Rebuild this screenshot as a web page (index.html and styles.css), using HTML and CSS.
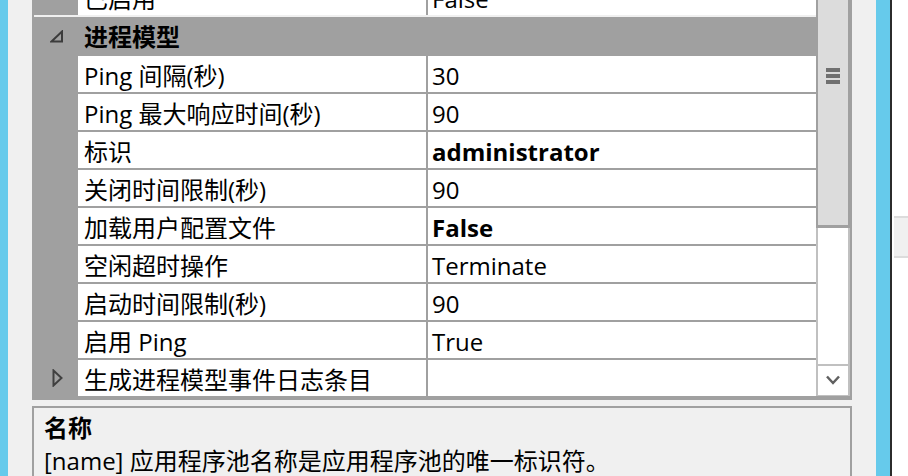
FILE: index.html
```html
<!DOCTYPE html>
<html lang="zh-CN">
<head>
<meta charset="utf-8">
<title>属性</title>
<link rel="stylesheet" href="styles.css">
</head>
<body>
<div class="page">
  <div class="edge-blue-left"></div>
  <main class="main">
    <section class="grid">
      <div class="list">
        <div class="row first">
          <div class="margin"></div>
          <div class="cell name">已启用</div>
          <div class="cell value">False</div>
        </div>
        <div class="sep"></div>
        <div class="cat">
          <div class="margin">
            <svg class="tri-open" width="14" height="13" viewBox="0 0 14 13"><polygon points="1.5,11.5 12,1.5 12,11.5" fill="none" stroke="#3c3c3c" stroke-width="2" stroke-linejoin="miter"/></svg>
          </div>
          <div class="cat-name">进程模型</div>
        </div>
        <div class="row"><div class="margin"></div><div class="cell name">Ping 间隔(秒)</div><div class="cell value">30</div></div>
        <div class="row"><div class="margin"></div><div class="cell name">Ping 最大响应时间(秒)</div><div class="cell value">90</div></div>
        <div class="row"><div class="margin"></div><div class="cell name">标识</div><div class="cell value bold">administrator</div></div>
        <div class="row"><div class="margin"></div><div class="cell name">关闭时间限制(秒)</div><div class="cell value">90</div></div>
        <div class="row"><div class="margin"></div><div class="cell name">加载用户配置文件</div><div class="cell value bold">False</div></div>
        <div class="row"><div class="margin"></div><div class="cell name">空闲超时操作</div><div class="cell value">Terminate</div></div>
        <div class="row"><div class="margin"></div><div class="cell name">启动时间限制(秒)</div><div class="cell value">90</div></div>
        <div class="row"><div class="margin"></div><div class="cell name">启用 Ping</div><div class="cell value">True</div></div>
        <div class="row">
          <div class="margin">
            <svg class="tri-closed" width="11" height="18" viewBox="0 0 11 18"><polygon points="1.5,1.5 9.5,9 1.5,16.5" fill="none" stroke="#404040" stroke-width="2"/></svg>
          </div>
          <div class="cell name">生成进程模型事件日志条目</div>
          <div class="cell value"></div>
        </div>
      </div>
      <div class="scrollbar">
        <div class="thumb">
          <svg class="grip" width="14" height="16" viewBox="0 0 14 16"><rect x="0" y="0" width="14" height="4" fill="#707070"/><rect x="0" y="6" width="14" height="4" fill="#707070"/><rect x="0" y="12" width="14" height="4" fill="#707070"/></svg>
        </div>
        <div class="track"></div>
        <div class="down">
          <svg width="14" height="11" viewBox="0 0 14 11"><polyline points="1,1.5 7,8 13,1.5" fill="none" stroke="#606060" stroke-width="2.5"/></svg>
        </div>
      </div>
    </section>
    <section class="desc">
      <div class="desc-title">名称</div>
      <div class="desc-text">[name] 应用程序池名称是应用程序池的唯一标识符。</div>
    </section>
  </main>
  <div class="edge-blue"></div>
  <div class="edge-dark"></div>
  <div class="edge-right"><div class="side-panel"></div></div>
</div>
</body>
</html>
```

FILE: styles.css
```css
* {
  box-sizing: border-box;
  margin: 0;
  padding: 0;
}

html, body {
  width: 908px;
  height: 476px;
  overflow: hidden;
}

body {
  background: #f0f0f0;
  font-family: "Open Sans", "Noto Sans CJK SC", sans-serif;
  font-size: 24px;
  color: #000;
}

.page {
  display: flex;
  height: 476px;
}

.edge-blue-left {
  width: 8px;
  flex: none;
  background: #66caeb;
}

.main {
  width: 868px;
  flex: none;
  padding: 0 24px;
  display: flex;
  flex-direction: column;
  gap: 6px;
  overflow: hidden;
}

.grid {
  height: 400px;
  flex: none;
  background: #a0a0a0;
  display: flex;
  overflow: hidden;
}

.list {
  width: 784px;
  flex: none;
  margin-top: -21px;
  display: flex;
  flex-direction: column;
}

.row {
  display: grid;
  grid-template-columns: 44px 348px 390px;
  column-gap: 2px;
  height: 36px;
  margin-bottom: 2px;
  flex: none;
}

.row.first {
  margin-bottom: 0;
}

.sep {
  height: 2px;
  margin-left: 2px;
  background: #f0f0f0;
  flex: none;
}

.cat {
  height: 39px;
  display: flex;
  align-items: center;
  flex: none;
}

.margin {
  width: 44px;
  flex: none;
  display: flex;
  align-items: center;
  padding-left: 18px;
}

.row .margin {
  padding-left: 20px;
}

.cell {
  background: #fff;
  height: 36px;
  line-height: 40px;
  overflow: hidden;
  white-space: nowrap;
}

.name {
  padding-left: 6px;
}

.value {
  padding-left: 4px;
}

.bold {
  font-weight: 700;
}

.cat-name {
  font-weight: 700;
  padding-left: 8px;
  line-height: 39px;
  white-space: nowrap;
}

.scrollbar {
  width: 36px;
  flex: none;
  display: flex;
  flex-direction: column;
  padding: 0 2px 4px 0;
}

.thumb {
  height: 228px;
  flex: none;
  background: #dcdcdc;
  border-left: 2px solid #a0a0a0;
  border-right: 2px solid #a0a0a0;
  border-bottom: 3px solid #a0a0a0;
  display: flex;
  justify-content: center;
  padding-top: 68px;
}

.track {
  flex: 1;
  background: #fff;
  border-left: 2px solid #c0c0c0;
  border-right: 2px solid #c0c0c0;
}

.down {
  height: 32px;
  flex: none;
  background: #fff;
  border: 2px solid #c0c0c0;
  border-bottom-width: 1px;
  display: flex;
  align-items: center;
  justify-content: center;
}

.desc {
  flex: 1;
  border: 2px solid #a0a0a0;
  border-bottom: 0;
  padding: 4px 10px 0;
  background: #f0f0f0;
  white-space: nowrap;
}

.desc-title {
  font-weight: 700;
  line-height: 32px;
}

.desc-text {
  line-height: 32px;
  margin-top: 1px;
}

.edge-blue {
  width: 14px;
  flex: none;
  background: #66caeb;
}

.edge-dark {
  width: 2px;
  flex: none;
  background: #2b2b2b;
}

.edge-right {
  width: 16px;
  flex: none;
  background: #fff;
  padding-top: 216px;
}

.side-panel {
  height: 42px;
  margin-left: 2px;
  background: #f0f0f0;
  border-top: 2px solid #dcdcdc;
  border-bottom: 2px solid #dcdcdc;
}
```
